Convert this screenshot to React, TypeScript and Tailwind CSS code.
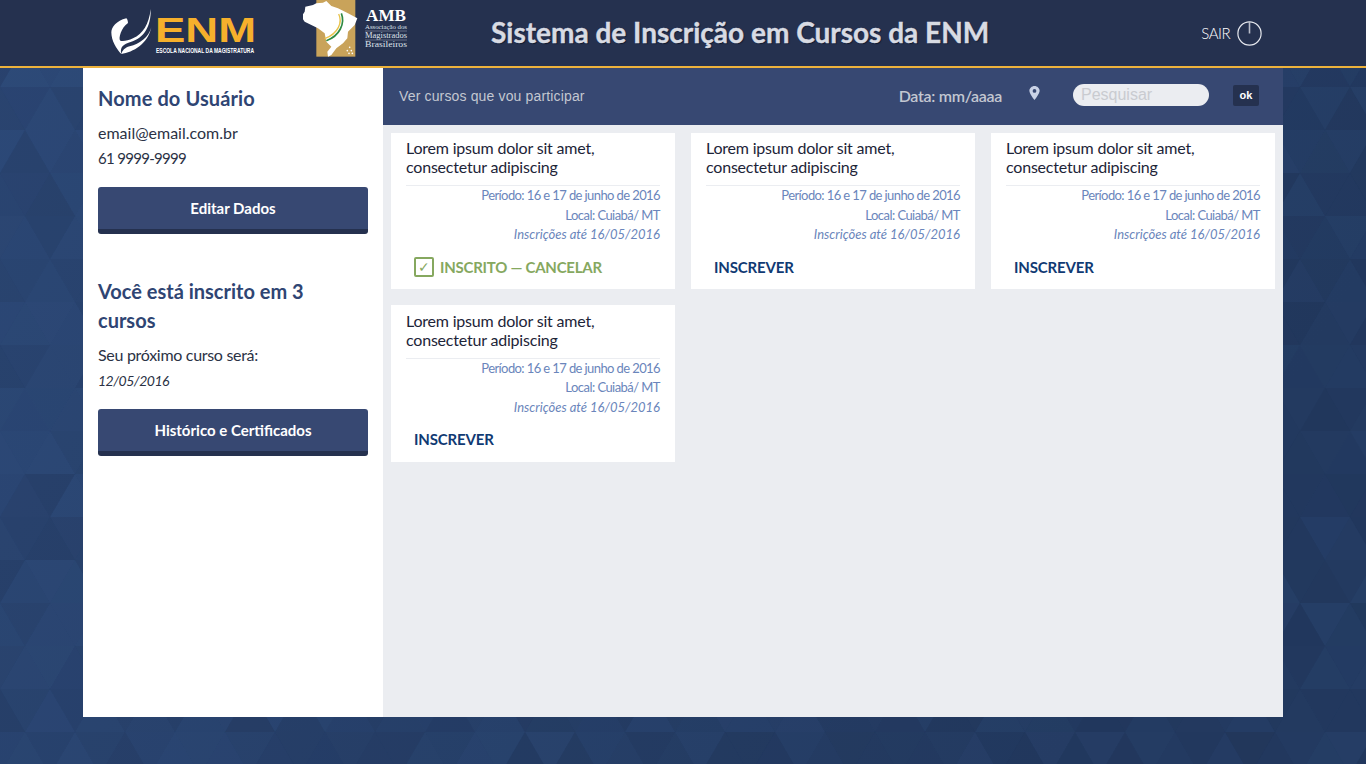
const sans = "font-['Lato','Noto_Sans',sans-serif]";

type Course = { enrolled?: boolean };
const courses: Course[] = [{ enrolled: true }, {}, {}, {}];

// triangle mesh behind the page
const Background = () => {
  const side = 50;
  const rowH = 43;
  const tris: { points: string; fill: string; opacity: number }[] = [];
  let seed = 7;
  const next = () => {
    seed = (seed * 16807) % 2147483647;
    return seed / 2147483647;
  };
  for (let r = 0; r < 18; r++) {
    for (let c = -1; c < 58; c++) {
      const y = 1 + r * rowH;
      const x = c * side + (r % 2 ? side / 2 : 0);
      const a = next();
      const b = next();
      tris.push({
        points: `${x},${y} ${x + side},${y} ${x + side / 2},${y + rowH}`,
        fill: a > 0.5 ? "#34558a" : "#1b2a4a",
        opacity: a > 0.5 ? (a - 0.5) * 0.3 : (0.5 - a) * 0.35,
      });
      tris.push({
        points: `${x + side / 2},${y + rowH} ${x + side + side / 2},${y + rowH} ${x + side},${y}`,
        fill: b > 0.5 ? "#34558a" : "#1b2a4a",
        opacity: b > 0.5 ? (b - 0.5) * 0.3 : (0.5 - b) * 0.35,
      });
    }
  }
  return (
    <svg className="absolute inset-0 h-full w-full" viewBox="0 0 1366 764" preserveAspectRatio="none">
      <defs>
        <linearGradient id="bgfade" x1="0" y1="0" x2="1" y2="0.35">
          <stop offset="0" stopColor="#2c4876" />
          <stop offset="1" stopColor="#233a60" />
        </linearGradient>
      </defs>
      <rect width="1366" height="764" fill="url(#bgfade)" />
      {tris.map((t, i) => (
        <polygon key={i} points={t.points} fill={t.fill} opacity={t.opacity} />
      ))}
    </svg>
  );
};

const EnmLogo = () => (
  <svg width="150" height="50" viewBox="0 0 150 50" className="mb-[2px] overflow-visible">
    <g transform="translate(-27 -8) scale(0.3333)" fill="#ffffff">
      <path d="M203 30 C198 75 180 105 150 118 C135 125 120 128 112 125 C105 120 115 85 135 72 C135 65 132 58 130 58 C100 65 85 85 85 100 C85 125 100 150 115 165 C110 145 120 135 145 128 C180 118 205 85 203 30 Z" />
      <path d="M205 85 C198 115 170 135 140 142 C125 146 118 155 115 165 C150 160 195 135 205 85 Z" />
    </g>
    <text x="45" y="35" fontFamily="'Liberation Sans',sans-serif" fontWeight="700" fontSize="35" fill="#f6b02c" textLength="101" lengthAdjust="spacingAndGlyphs">
      ENM
    </text>
    <text x="46" y="46" fontFamily="'Liberation Sans',sans-serif" fontWeight="700" fontSize="7" fill="#ffffff" textLength="98" lengthAdjust="spacingAndGlyphs">
      ESCOLA NACIONAL DA MAGISTRATURA
    </text>
  </svg>
);

const AmbLogo = () => (
  <svg width="112" height="60" viewBox="0 0 112 60" className="mb-[6px]">
    <g transform="translate(-5 0) scale(0.3333)">
      <rect x="55" y="0" width="117" height="170" fill="#c9a35a" />
      <path
        d="M22 20 L45 15 L55 10 L75 8 L85 3 L100 18 L120 25 L150 40 L178 55 L170 75 L150 95 L148 115 L135 130 L115 145 L100 165 L90 170 L88 155 L100 140 L85 125 L80 100 L60 85 L40 75 L20 65 L10 50 L20 35 Z"
        fill="#ffffff"
      />
      <path d="M122 42 C134 66 122 100 80 116" fill="none" stroke="#e8c24a" strokeWidth="4" />
      <path d="M130 40 C142 70 125 108 85 122" fill="none" stroke="#2f8a43" strokeWidth="5" />
      <g fill="#ffffff">
        <circle cx="155" cy="142" r="2.5" />
        <circle cx="148" cy="152" r="2.5" />
        <circle cx="160" cy="152" r="2.5" />
        <circle cx="153" cy="160" r="2.5" />
        <circle cx="163" cy="160" r="2.5" />
      </g>
    </g>
    <text x="63" y="21" fontFamily="'Liberation Serif',serif" fontWeight="700" fontSize="17" fill="#fff" textLength="40" lengthAdjust="spacingAndGlyphs">AMB</text>
    <text x="62" y="29" fontFamily="'Liberation Serif',serif" fontSize="7" fill="#dfe2ea" textLength="42" lengthAdjust="spacingAndGlyphs">Associação dos</text>
    <line x1="62" y1="31" x2="104" y2="31" stroke="#8d94a8" strokeWidth="0.6" />
    <text x="62" y="38" fontFamily="'Liberation Serif',serif" fontSize="8" fill="#dfe2ea" textLength="42" lengthAdjust="spacingAndGlyphs">Magistrados</text>
    <line x1="62" y1="40" x2="104" y2="40" stroke="#8d94a8" strokeWidth="0.6" />
    <text x="62" y="47" fontFamily="'Liberation Serif',serif" fontSize="8" fill="#dfe2ea" textLength="42" lengthAdjust="spacingAndGlyphs">Brasileiros</text>
  </svg>
);

const CourseCard = ({ enrolled }: Course) => (
  <div className="h-[156.45px] bg-white px-[15px] pt-[5.1px]">
    <h3 className="border-b border-[#ebedf1] pb-[9px] text-[16px] leading-[19px] tracking-[-0.2px] text-[#1d2438]">
      Lorem ipsum dolor sit amet, consectetur adipiscing
    </h3>
    <div className="text-right text-[13px] leading-[19.5px] text-[#6a85bb]">
      <p className="tracking-[-0.6px]">Período: 16 e 17 de junho de 2016</p>
      <p className="tracking-[-0.55px]">Local: Cuiabá/ MT</p>
      <p className="italic">Inscrições até 16/05/2016</p>
    </div>
    {enrolled ? (
      <button className="mt-[11px] ml-2 flex items-center gap-[6px] text-[15px] font-bold leading-[22px] tracking-[-0.25px] text-[#86a85f]">
        <span className="flex h-5 w-5 items-center justify-center rounded-[2px] border-2 border-[#86a85f] text-[14px] font-normal leading-none">
          ✓
        </span>
        INSCRITO — CANCELAR
      </button>
    ) : (
      <button className="mt-[11px] ml-2 text-[15px] font-bold leading-[22px] tracking-[-0.15px] text-[#103a73]">INSCREVER</button>
    )}
  </div>
);

const SideButton = ({ children }: { children: string }) => (
  <button className="h-[47px] w-full rounded-[3px] border-b-[5px] border-[#25314f] bg-[#374872] text-[15px] font-bold text-white">
    {children}
  </button>
);

export default function App() {
  return (
    <div className={`relative flex h-[764px] w-full flex-col overflow-hidden ${sans}`}>
      <Background />
      <header className="relative flex h-[68px] shrink-0 items-center border-b-2 border-[#edb23c] bg-[#25314f]">
        <div className="ml-[110px] w-[193px]">
          <EnmLogo />
        </div>
        <div className="w-[188px]">
          <AmbLogo />
        </div>
        <h1 className="mb-[2px] text-[28px] font-bold text-[#d8dbe3] [-webkit-text-stroke:0.4px_#d8dbe3] [text-shadow:1px_1px_1px_#111a2e]">
          Sistema de Inscrição em Cursos da ENM
        </h1>
        <div className="ml-auto mr-[104px] flex items-center gap-[7px] text-[15px] font-light text-white">
          <span className="tracking-[-0.5px]">SAIR</span>
          <svg width="25" height="25" viewBox="0 0 25 25" fill="none" stroke="#e6e8ee">
            <circle cx="12.5" cy="12.5" r="11.6" strokeWidth="1.2" />
            <line x1="12.5" y1="0.5" x2="12.5" y2="12.5" stroke="#b9bdc9" strokeWidth="1.6" />
          </svg>
        </div>
      </header>

      <div className="relative mx-auto flex h-[649px] w-[1200px]">
        <aside className="w-[300px] shrink-0 bg-white px-[15px] text-[16px] leading-[25px] text-[#2b3245]">
          <h2 className="mt-[17px] text-[20px] font-bold leading-[26px] tracking-[0.1px] text-[#2f4573]">Nome do Usuário</h2>
          <p className="mt-[9px]">email@email.com.br</p>
          <p className="mt-[1px] text-[15px] tracking-[-0.7px]">61 9999-9999</p>
          <div className="mt-[16px]">
            <SideButton>Editar Dados</SideButton>
          </div>
          <h2 className="mt-[43px] pr-4 text-[20px] font-bold leading-[29px] text-[#2f4573]">
            Você está inscrito em 3 cursos
          </h2>
          <p className="mt-[7px] tracking-[-0.3px]">Seu próximo curso será:</p>
          <p className="mt-[1px] text-[14px] italic tracking-[-0.5px]">12/05/2016</p>
          <div className="mt-[16px]">
            <SideButton>Histórico e Certificados</SideButton>
          </div>
        </aside>

        <main className="flex-1 bg-[#ebedf1]">
          <div className="flex h-[57px] items-center bg-[#374872] pl-4 text-[#c3c7d1]">
            <span className="font-['Liberation_Sans',sans-serif] text-[14px] tracking-[0.15px]">Ver cursos que vou participar</span>
            <span className="ml-auto mb-[1px] text-[16px] font-semibold tracking-[-0.3px]">Data: mm/aaaa</span>
            <svg className="mb-[7px] ml-[27px]" width="11" height="14" viewBox="0 0 11 15" fill="#c9d2e6">
              <path
                fillRule="evenodd"
                d="M5.5 0 C2.5 0 0 2.3 0 5.2 C0 8.8 5.5 15 5.5 15 C5.5 15 11 8.8 11 5.2 C11 2.3 8.5 0 5.5 0 Z M5.5 3.3 A2 2 0 1 1 5.5 7.3 A2 2 0 1 1 5.5 3.3 Z"
              />
            </svg>
            <input
              placeholder="Pesquisar"
              className="mb-[3px] ml-[33px] h-[22px] w-[136px] rounded-full bg-[#ebedf1] px-2 font-['Liberation_Sans',sans-serif] text-[16px] outline-none placeholder:text-[#c9cbd0]"
            />
            <button className="mr-6 mb-[3px] ml-6 h-[21px] w-[26px] rounded-[2px] bg-[#25314f] font-['Liberation_Sans',sans-serif] text-[11px] font-bold text-white">
              ok
            </button>
          </div>
          <div className="grid grid-cols-3 gap-4 p-2">
            {courses.map((c, i) => (
              <CourseCard key={i} enrolled={c.enrolled} />
            ))}
          </div>
        </main>
      </div>
    </div>
  );
}
